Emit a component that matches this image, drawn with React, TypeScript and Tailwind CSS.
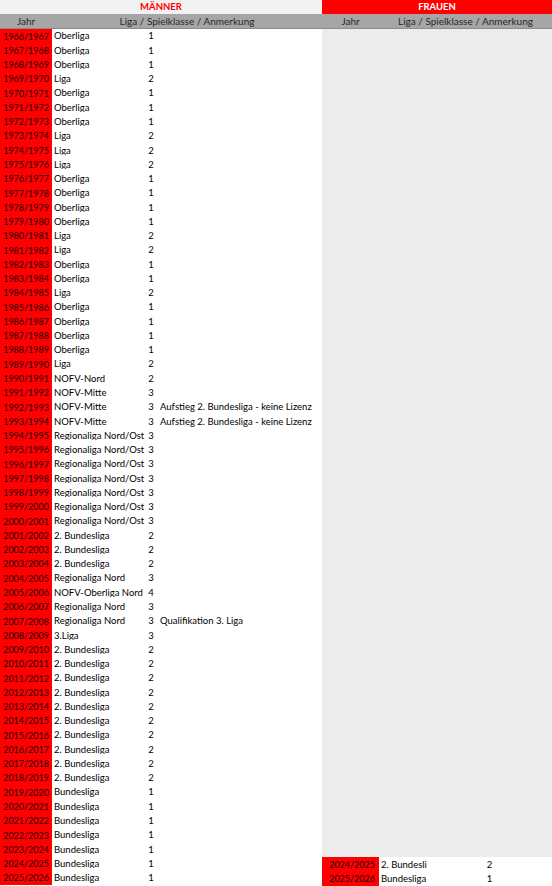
import React from 'react';

type Row = { jahr: string; liga: string; klasse: number; note?: string };

const men: Row[] = [
    { jahr: '1966/1967', liga: 'Oberliga', klasse: 1 },
    { jahr: '1967/1968', liga: 'Oberliga', klasse: 1 },
    { jahr: '1968/1969', liga: 'Oberliga', klasse: 1 },
    { jahr: '1969/1970', liga: 'Liga', klasse: 2 },
    { jahr: '1970/1971', liga: 'Oberliga', klasse: 1 },
    { jahr: '1971/1972', liga: 'Oberliga', klasse: 1 },
    { jahr: '1972/1973', liga: 'Oberliga', klasse: 1 },
    { jahr: '1973/1974', liga: 'Liga', klasse: 2 },
    { jahr: '1974/1975', liga: 'Liga', klasse: 2 },
    { jahr: '1975/1976', liga: 'Liga', klasse: 2 },
    { jahr: '1976/1977', liga: 'Oberliga', klasse: 1 },
    { jahr: '1977/1978', liga: 'Oberliga', klasse: 1 },
    { jahr: '1978/1979', liga: 'Oberliga', klasse: 1 },
    { jahr: '1979/1980', liga: 'Oberliga', klasse: 1 },
    { jahr: '1980/1981', liga: 'Liga', klasse: 2 },
    { jahr: '1981/1982', liga: 'Liga', klasse: 2 },
    { jahr: '1982/1983', liga: 'Oberliga', klasse: 1 },
    { jahr: '1983/1984', liga: 'Oberliga', klasse: 1 },
    { jahr: '1984/1985', liga: 'Liga', klasse: 2 },
    { jahr: '1985/1986', liga: 'Oberliga', klasse: 1 },
    { jahr: '1986/1987', liga: 'Oberliga', klasse: 1 },
    { jahr: '1987/1988', liga: 'Oberliga', klasse: 1 },
    { jahr: '1988/1989', liga: 'Oberliga', klasse: 1 },
    { jahr: '1989/1990', liga: 'Liga', klasse: 2 },
    { jahr: '1990/1991', liga: 'NOFV-Nord', klasse: 2 },
    { jahr: '1991/1992', liga: 'NOFV-Mitte', klasse: 3 },
    { jahr: '1992/1993', liga: 'NOFV-Mitte', klasse: 3, note: 'Aufstieg 2. Bundesliga - keine Lizenz' },
    { jahr: '1993/1994', liga: 'NOFV-Mitte', klasse: 3, note: 'Aufstieg 2. Bundesliga - keine Lizenz' },
    { jahr: '1994/1995', liga: 'Regionaliga Nord/Ost', klasse: 3 },
    { jahr: '1995/1996', liga: 'Regionaliga Nord/Ost', klasse: 3 },
    { jahr: '1996/1997', liga: 'Regionaliga Nord/Ost', klasse: 3 },
    { jahr: '1997/1998', liga: 'Regionaliga Nord/Ost', klasse: 3 },
    { jahr: '1998/1999', liga: 'Regionaliga Nord/Ost', klasse: 3 },
    { jahr: '1999/2000', liga: 'Regionaliga Nord/Ost', klasse: 3 },
    { jahr: '2000/2001', liga: 'Regionaliga Nord/Ost', klasse: 3 },
    { jahr: '2001/2002', liga: '2. Bundesliga', klasse: 2 },
    { jahr: '2002/2003', liga: '2. Bundesliga', klasse: 2 },
    { jahr: '2003/2004', liga: '2. Bundesliga', klasse: 2 },
    { jahr: '2004/2005', liga: 'Regionaliga Nord', klasse: 3 },
    { jahr: '2005/2006', liga: 'NOFV-Oberliga Nord', klasse: 4 },
    { jahr: '2006/2007', liga: 'Regionaliga Nord', klasse: 3 },
    { jahr: '2007/2008', liga: 'Regionaliga Nord', klasse: 3, note: 'Qualifikation 3. Liga' },
    { jahr: '2008/2009', liga: '3.Liga', klasse: 3 },
    { jahr: '2009/2010', liga: '2. Bundesliga', klasse: 2 },
    { jahr: '2010/2011', liga: '2. Bundesliga', klasse: 2 },
    { jahr: '2011/2012', liga: '2. Bundesliga', klasse: 2 },
    { jahr: '2012/2013', liga: '2. Bundesliga', klasse: 2 },
    { jahr: '2013/2014', liga: '2. Bundesliga', klasse: 2 },
    { jahr: '2014/2015', liga: '2. Bundesliga', klasse: 2 },
    { jahr: '2015/2016', liga: '2. Bundesliga', klasse: 2 },
    { jahr: '2016/2017', liga: '2. Bundesliga', klasse: 2 },
    { jahr: '2017/2018', liga: '2. Bundesliga', klasse: 2 },
    { jahr: '2018/2019', liga: '2. Bundesliga', klasse: 2 },
    { jahr: '2019/2020', liga: 'Bundesliga', klasse: 1 },
    { jahr: '2020/2021', liga: 'Bundesliga', klasse: 1 },
    { jahr: '2021/2022', liga: 'Bundesliga', klasse: 1 },
    { jahr: '2022/2023', liga: 'Bundesliga', klasse: 1 },
    { jahr: '2023/2024', liga: 'Bundesliga', klasse: 1 },
    { jahr: '2024/2025', liga: 'Bundesliga', klasse: 1 },
    { jahr: '2025/2026', liga: 'Bundesliga', klasse: 1 },
];

const women: Row[] = [
    { jahr: '2024/2025', liga: '2. Bundesliga', klasse: 2 },
    { jahr: '2025/2026', liga: 'Bundesliga', klasse: 1 },
];

export default function App() {
    return (
        <div className="w-[552px] h-[886px] overflow-hidden flex bg-white text-black text-[9.5px] leading-none font-['Lato',sans-serif]">
            {/* Männer */}
            <div className="w-[322px] flex flex-col">
                <div className="h-[14px] bg-[#f2f2f2] flex items-center justify-center font-bold text-[#ff0000]">MÄNNER</div>
                <div className="h-[15px] bg-[#a6a6a6] border-b border-[#8c8c8c] flex items-center text-[#262626] text-[10px]">
                    <div className="w-[52px] text-center">Jahr</div>
                    <div className="flex-1 text-center">Liga / Spielklasse / Anmerkung</div>
                </div>
                {men.map((r) => (
                    <div key={r.jahr} className="h-[14.28px] flex items-center whitespace-nowrap">
                        <div className="w-[52px] h-full bg-[#ff0000] flex items-center justify-end pr-[3px] text-[9px] text-[#1a0000]">{r.jahr}</div>
                        <div className="w-[94px] overflow-hidden pl-[2px]">{r.liga}</div>
                        <div className="w-[10px] text-center">{r.klasse}</div>
                        <div className="flex-1 pl-[4px]">{r.note}</div>
                    </div>
                ))}
            </div>
            {/* Frauen */}
            <div className="w-[230px] flex flex-col">
                <div className="h-[14px] bg-[#ff0000] flex items-center justify-center font-bold text-white">FRAUEN</div>
                <div className="h-[15px] bg-[#a6a6a6] border-b border-[#8c8c8c] flex items-center text-[#262626] text-[10px]">
                    <div className="w-[57px] text-center">Jahr</div>
                    <div className="flex-1 text-center">Liga / Spielklasse / Anmerkung</div>
                </div>
                <div className="flex-1 bg-[#ececec]" />
                {women.map((r) => (
                    <div key={r.jahr} className="h-[14.28px] flex items-center whitespace-nowrap">
                        <div className="w-[57px] h-full bg-[#ff0000] flex items-center justify-end pr-[4px] text-[9px] text-[#1a0000]">{r.jahr}</div>
                        <div className="w-[48px] overflow-hidden pl-[2px]">{r.liga}</div>
                        <div className="flex-1 text-center">{r.klasse}</div>
                    </div>
                ))}
            </div>
        </div>
    );
}
